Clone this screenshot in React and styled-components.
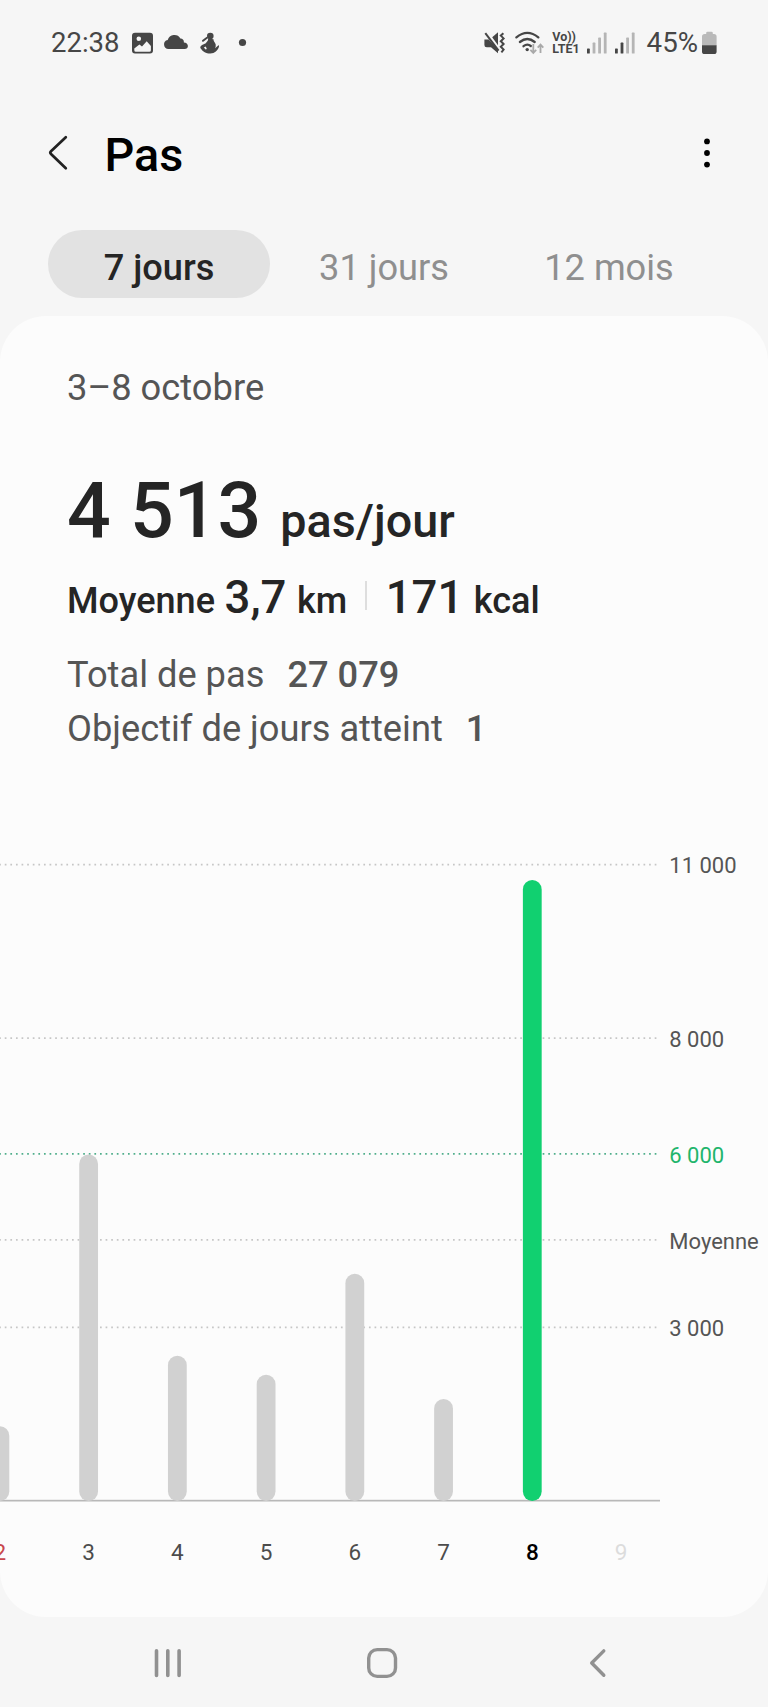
import React from "react";
import styled, { createGlobalStyle } from "styled-components";

const tabs = ["7 jours", "31 jours", "12 mois"];

const days = [
  { day: 2, steps: 1291, color: "#c9474d" },
  { day: 3, steps: 5990 },
  { day: 4, steps: 2510 },
  { day: 5, steps: 2183 },
  { day: 6, steps: 3928 },
  { day: 7, steps: 1763 },
  { day: 8, steps: 10735, today: true, color: "#000" },
  { day: 9, steps: 0, color: "#dcdcdc" },
];

const levels = [
  { value: 11000, label: "11 000" },
  { value: 8000, label: "8 000" },
  { value: 6000, label: "6 000", goal: true },
  { value: 4513, label: "Moyenne" },
  { value: 3000, label: "3 000" },
];

const BASE = 684;
const DAY_WIDTH = 88.73;
const BAR_WIDTH = 18.8;
const yOf = (steps) => BASE - steps * 0.05785;

const StatusIcons = () => (
  <svg width='118' height='30' viewBox='130 28 118 30' fill='#464646'>
    <path
      fillRule='evenodd'
      d='M135 32.7h15a3 3 0 0 1 3 3v14.8a3 3 0 0 1-3 3h-15a3 3 0 0 1-3-3V35.700a3 3 0 0 1 3-3zM134.300 48.500v1.800a1.500 1.500 0 0 0 1.500 1.500h13.600a1.500 1.500 0 0 0 1.500-1.500v-4.300l-4.200-4.800-4.700 5.200-2.600-2zM138.800 36.500a2.300 2.300 0 1 0 0 4.600 2.300 2.300 0 0 0 0-4.600z'
    />
    <path d='M168.500 49a4.600 4.600 0 0 1-.8-9.100 7 7 0 0 1 12.700-1.400 3.800 3.800 0 0 1 3.500 4c2.300.2 4 1.500 4 3.500 0 1.800-1.300 3-3.200 3z' />
    <circle cx='210.300' cy='36' r='3.300' />
    <path d='M208 38.500l5.500.7c-.2 2 1.900 3.300 2.200 5.300.2 1.500 0 2.700-.6 3.700l3.700-3.300.2 1.800c-1.500 4-4 6.600-8.700 6.800-4.700 0-7-1.500-9.800-5.200-.6-1.200.2-2.300 1.600-3.200l3.700-1.900c1.200-1.500 2.800-3 2.200-4.700z' />
    <path d='M203 40.800l4-3' stroke='#464646' strokeWidth='2' strokeLinecap='round' />
    <path d='M203.800 47.400l2-.8 1 2.400-1.200.4z' fill='#f6f6f6' />
    <circle cx='242.500' cy='42.500' r='3.600' />
  </svg>
);

const MuteIcon = () => (
  <svg width='23' height='24' viewBox='482 31 23 24' fill='#464646'>
    <path d='M483.400 39.500h4.200l9.400 9.800v4l-7-6h-4.300q-2.300 0-2.300-2.300z' />
    <path d='M491.200 37.300l5.800-5v13z' />
    <path
      d='M484.300 33.200l13.300 17.500M502.400 33.200l-2.600 2.400 2.800 2.800-2.800 2.800 2.800 2.800-2.800 2.800 2.800 2.800-2.200 2.700'
      stroke='#464646'
      strokeWidth='2'
      fill='none'
    />
  </svg>
);

const WifiIcon = () => (
  <svg width='32' height='26' viewBox='512 30 32 26' fill='none'>
    <g stroke='#464646' strokeWidth='2.300' strokeLinecap='round'>
      <path d='M515.400 37.400Q526.300 28.400 537.300 37.400' />
      <path d='M518.900 42Q526.300 36 533.700 42' />
      <path d='M522.500 46.200Q526.300 43.200 529.800 46' />
    </g>
    <circle cx='526.200' cy='49.600' r='1.700' fill='#464646' />
    <g stroke='#a9a9a9' strokeWidth='1.800'>
      <path d='M532.300 44v8.600M529.400 49.900l2.900 3 2.900-3' />
      <path d='M539.500 53v-8.300M536.700 47.600l2.800-3 2.800 3' />
    </g>
  </svg>
);

const SignalIcon = ({ level }) => (
  <svg width='21.500' height='22' viewBox='0 0 21.500 22'>
    {[5, 11, 16, 21].map((h, i) => (
      <rect
        key={h}
        x={i * 5.6}
        y={21.6 - h}
        width='2.800'
        height={h}
        rx='0.600'
        fill={i < level ? "#464646" : "#b5b5b5"}
      />
    ))}
  </svg>
);

const BatteryIcon = () => (
  <svg width='15' height='24' viewBox='702 31 15 24'>
    <path
      d='M706.200 34v-1q0-1.200 1.200-1.200h4.200q1.200 0 1.200 1.200v1h1.200a2.600 2.600 0 0 1 2.600 2.600v9h-14.600v-9a2.600 2.600 0 0 1 2.600-2.600z'
      fill='#b9b9b9'
    />
    <path d='M702 45.200h14.600v6.200a2.600 2.600 0 0 1-2.600 2.600h-9.400a2.600 2.600 0 0 1-2.600-2.600z' fill='#464646' />
  </svg>
);

const StepsChart = () => (
  <Chart viewBox='0 0 768 800'>
    {levels.map(({ value, label, goal }) => (
      <g key={label}>
        <line
          x1='656.400'
          x2='0'
          y1={yOf(value)}
          y2={yOf(value)}
          stroke={goal ? "#4fae8b" : "#c6c6c6"}
          strokeWidth='1.700'
          strokeDasharray='1.700 3.903'
        />
        <AxisText x='669.300' y={yOf(value) + 8.8} fill={goal ? "#1fb56c" : "#555"}>
          {label}
        </AxisText>
      </g>
    ))}
    <rect x='0' y={BASE - 1.2} width='660' height='1.700' fill='#b8b8b8' />
    {days.map(({ day, steps, today, color }, i) => {
      const x = i * DAY_WIDTH - 0.1;
      return (
        <g key={day}>
          {steps > 0 && (
            <rect
              x={x - BAR_WIDTH / 2}
              y={yOf(steps)}
              width={BAR_WIDTH}
              height={BASE - yOf(steps)}
              rx={BAR_WIDTH / 2}
              fill={today ? "#11d070" : "#d1d1d1"}
            />
          )}
          <DayText x={x} y='743.300' fill={color || "#4c4c4c"} $today={today}>
            {day}
          </DayText>
        </g>
      );
    })}
  </Chart>
);

const App = () => {
  return (
    <Page>
      <GlobalStyle />
      <StatusBar>
        <Clock>22:38</Clock>
        <StatusIcons />
        <StatusRight>
          <MuteIcon />
          <WifiIcon />
          <Network>
            <span>Vo))</span>
            <span>LTE1</span>
          </Network>
          <SignalIcon level={1} />
          <SignalIcon level={2} />
          <BatteryLevel>45%</BatteryLevel>
          <BatteryIcon />
        </StatusRight>
      </StatusBar>
      <Header>
        <svg width='22' height='38' viewBox='47 134 22 38' fill='none'>
          <path
            d='M65.800 137.200L51 151.200Q49.600 152.600 51 154L65.800 168.200'
            stroke='#222'
            strokeWidth='2.700'
            strokeLinecap='round'
          />
        </svg>
        <Title>Pas</Title>
        <MenuButton aria-label='menu'>
          <svg width='8' height='32' viewBox='0 0 8 32'>
            <circle cx='4' cy='4.400' r='2.900' />
            <circle cx='4' cy='16' r='2.900' />
            <circle cx='4' cy='27.600' r='2.900' />
          </svg>
        </MenuButton>
      </Header>
      <Tabs>
        {tabs.map((tab, i) => (
          <Tab key={tab} $active={i === 0}>
            {tab}
          </Tab>
        ))}
      </Tabs>
      <Card>
        <Summary>
          <Period>3–8 octobre</Period>
          <Steps>
            4 513 <small>pas/jour</small>
          </Steps>
          <Averages>
            <span>Moyenne</span>
            <Figure>3,7</Figure>
            <span>km</span>
            <Divider />
            <Figure>171</Figure>
            <span>kcal</span>
          </Averages>
          <Total>
            Total de pas <strong>27 079</strong>
          </Total>
          <Total>
            Objectif de jours atteint <strong>1</strong>
          </Total>
        </Summary>
        <StepsChart />
      </Card>
      <NavBar>
        <svg width='27' height='32' viewBox='0 0 27 32' stroke='#919191' strokeWidth='3.600' strokeLinecap='round'>
          <path d='M2.500 3.800v24.600M13.800 3.800v24.600M25.100 3.800v24.600' />
        </svg>
        <HomeIcon viewBox='0 0 32 32'>
          <rect x='2.700' y='2.600' width='26.800' height='26.800' rx='8.500' />
        </HomeIcon>
        <svg width='20' height='32' viewBox='0 0 20 32' fill='none' stroke='#919191' strokeWidth='3.400' strokeLinecap='round'>
          <path d='M15.800 3.900L3.700 16l12.100 12.300' strokeLinejoin='round' />
        </svg>
      </NavBar>
    </Page>
  );
};

const GlobalStyle = createGlobalStyle`
  * {
    box-sizing: border-box;
    margin: 0;
    padding: 0;
  }
  body {
    background: #f6f6f6;
    font-family: Roboto, "Liberation Sans", sans-serif;
  }
  svg {
    display: block;
    flex-shrink: 0;
  }
`;

const Page = styled.main`
  display: flex;
  flex-direction: column;
  width: 768px;
  height: 1707px;
  overflow: hidden;
`;

const StatusBar = styled.div`
  display: flex;
  align-items: center;
  height: 85px;
  padding: 0 51px;
  color: #464646;
`;

const Clock = styled.span`
  width: 79px;
  font-size: 27.5px;
`;

const StatusRight = styled.div`
  display: flex;
  align-items: center;
  margin-left: auto;
  gap: 7px;
`;

const Network = styled.div`
  display: flex;
  flex-direction: column;
  font-size: 12.5px;
  font-weight: 700;
  line-height: 12px;
`;

const BatteryLevel = styled.span`
  margin: 0 -3px 0 3px;
  font-size: 27.7px;
`;

const Header = styled.header`
  display: flex;
  align-items: center;
  height: 135px;
  padding: 0 57px 0 47px;
`;

const Title = styled.h1`
  margin-left: 35.5px;
  padding-top: 5px;
  font-size: 46.7px;
  font-weight: 500;
  color: #000;
`;

const MenuButton = styled.button`
  margin-left: auto;
  border: none;
  background: none;
`;

const Tabs = styled.nav`
  display: grid;
  grid-template-columns: repeat(3, 222px);
  gap: 3px;
  padding: 10px 48px 18px;
`;

const Tab = styled.button`
  height: 68px;
  padding-top: 6px;
  border: none;
  border-radius: 34px;
  background: ${({ $active }) => ($active ? "#e2e2e2" : "none")};
  color: ${({ $active }) => ($active ? "#252525" : "#8f8f8f")};
  font-family: inherit;
  font-size: 36.2px;
  font-weight: ${({ $active }) => ($active ? 500 : 400)};
`;

const Card = styled.section`
  display: flex;
  flex-direction: column;
  justify-content: space-between;
  height: 1301px;
  border-radius: 46px;
  background: #fcfcfc;
  overflow: hidden;
`;

const Summary = styled.div`
  padding: 51px 67px 0;
  color: #252525;
`;

const Period = styled.p`
  font-size: 36.3px;
  line-height: 42px;
  color: #555;
`;

const Steps = styled.h2`
  margin-top: 57px;
  font-size: 77px;
  font-weight: 500;
  line-height: 90px;
  small {
    font-size: 46.7px;
    line-height: 1;
  }
`;

const Averages = styled.div`
  display: flex;
  align-items: baseline;
  height: 52px;
  margin-top: 16px;
  font-size: 36.1px;
  font-weight: 500;
  line-height: 52px;
`;

const Figure = styled.span`
  margin: 0 10.5px 0 9.5px;
  font-size: 45.5px;
`;

const Divider = styled.i`
  align-self: flex-start;
  width: 2px;
  height: 29px;
  margin: 9px 9px 0 18px;
  background: #dedede;
`;

const Total = styled.p`
  font-size: 36.25px;
  line-height: 54px;
  color: #555;
  ${Averages} + & {
    margin-top: 24px;
  }
  strong {
    margin-left: 14px;
    font-weight: 500;
  }
`;

const Chart = styled.svg`
  width: 768px;
  height: 800px;
`;

const AxisText = styled.text`
  font-size: 22px;
`;

const DayText = styled.text`
  font-size: 22.5px;
  font-weight: ${({ $today }) => ($today ? 500 : 400)};
  text-anchor: middle;
`;

const NavBar = styled.footer`
  display: flex;
  align-items: center;
  justify-content: space-between;
  height: 90px;
  padding: 2px 160px 0 154px;
`;

const HomeIcon = styled.svg`
  width: 32px;
  height: 32px;
  margin-right: 5px;
  fill: none;
  stroke: #919191;
  stroke-width: 3.4px;
`;

export default App;
